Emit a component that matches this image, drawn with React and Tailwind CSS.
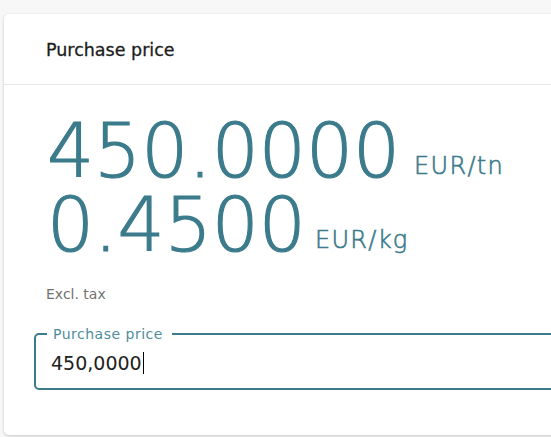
import React from 'react';

const font = { fontFamily: '"DejaVu Sans", "Noto Sans", sans-serif' };

const PriceRow = ({ value, unit, gap }) => (
  <div className="h-[74px] leading-[74px] whitespace-nowrap">
    <span className="text-[74px] [-webkit-text-stroke:1.2px_#3b7b8b]">{value}</span>
    <span className={`${gap} text-[24px] leading-none tracking-[1.3px] align-[3px] [-webkit-text-stroke:0.6px_#3b7b8b]`}>
      {unit}
    </span>
  </div>
);

const App = () => {
  return (
    <div className="min-h-screen bg-[#f7f7f7] pt-[14px] pl-[4px] overflow-hidden" style={font}>
      <div className="w-[570px] h-[421px] bg-white rounded-[5px] shadow-[0_1px_3px_rgba(0,0,0,0.2)]">
        <div className="h-[71px] flex items-center pt-[3px] pl-[42px] border-b border-[#e6e6e6]">
          <h2 className="text-[17.5px] text-[#1c1c1c] [-webkit-text-stroke:0.3px_#1c1c1c]">Purchase price</h2>
        </div>
        <div className="pl-[42px] pt-[29px]">
          <div className="ml-[1px] text-[#3b7b8b] font-extralight">
            <PriceRow value="450.0000" unit="EUR/tn" gap="ml-[14px]" />
            <PriceRow value="0.4500" unit="EUR/kg" gap="ml-[9px]" />
          </div>
          <div className="mt-[22px] text-[14px] leading-[20px] text-[#727272]">Excl. tax</div>
        </div>
        <fieldset className="ml-[30px] mt-[23px] h-[63px] border-2 border-[#3b7b8b] rounded-[5px] px-[15px]">
          <legend className="-ml-[4px] pl-[6px] pr-[9px] text-[14px] leading-[14px] tracking-[0.5px] text-[#4f8d9c]">
            Purchase price
          </legend>
          <div className="mt-[10px] flex items-center h-[24px] text-[19px] leading-[24px] text-[#222]">
            <span>450,0000</span>
            <span className="ml-[1px] w-px h-[22px] bg-black" />
          </div>
        </fieldset>
      </div>
    </div>
  );
};

export default App;
